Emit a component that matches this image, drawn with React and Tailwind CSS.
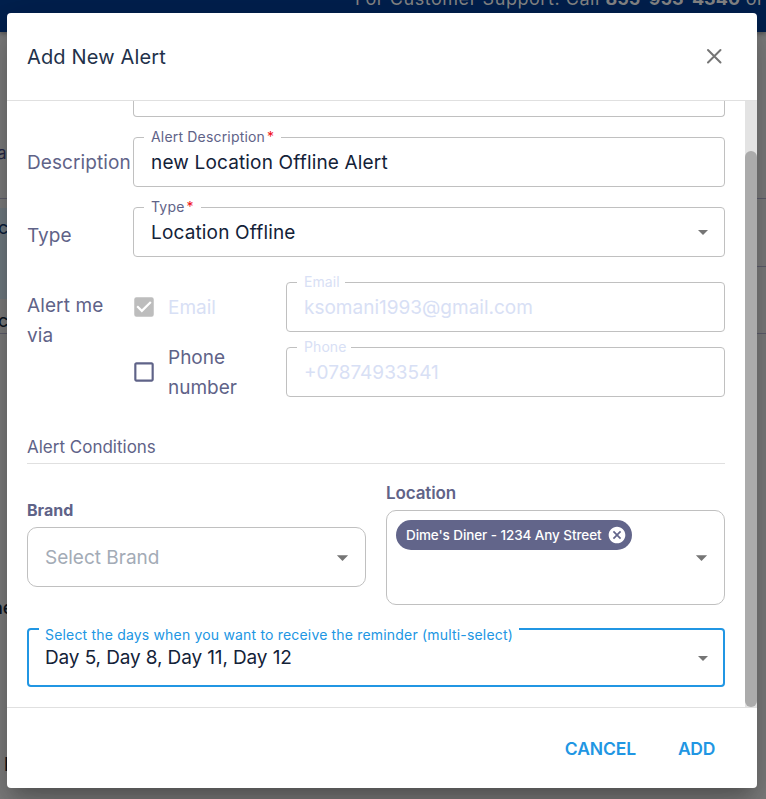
import React, { useState } from 'react';
import { MdArrowDropDown, MdCancel, MdCheckBox, MdCheckBoxOutlineBlank } from 'react-icons/md';

// text box with an outlined border and a label sitting in the notch
const OutlinedField = ({ label, value, required, disabled, select }) => (
  <div className="relative flex h-[50px] flex-1 items-center justify-between rounded border border-[#c0c0c0] pr-[9px] pl-[17px]">
    <span
      className={`absolute -top-[11px] left-[10px] bg-white pl-[7px] text-[14px] leading-5 whitespace-nowrap ${
        disabled ? 'pr-[5px] tracking-[0.08px] text-[#d8e0f5]' : 'pr-[7px] tracking-[0.18px] text-[#5f6388]'
      }`}
    >
      {label}
      {required && <span className="ml-[2px] text-[#f01018]">*</span>}
    </span>
    <span
      className={`pt-0.5 text-[19px] leading-6 whitespace-nowrap ${
        disabled ? 'text-[#d8e0f5]' : 'tracking-[0.16px] text-[#132238]'
      }`}
    >
      {value}
    </span>
    {select && <MdArrowDropDown className="size-6 text-[#757575]" />}
  </div>
);

const Backdrop = () => (
  <div className="absolute inset-0 flex flex-col overflow-hidden bg-[#7f7f7f]">
    <div className="h-8 shrink-0 bg-[#00204e] pl-[355px] shadow-[0_2px_4px_rgba(0,0,0,0.3)]">
      <p className="-mt-[13px] text-[18px] leading-6 tracking-[0.55px] whitespace-nowrap text-[#858585]">
        For Customer Support: Call <b className="tracking-normal">855-953-4340</b> or
      </p>
    </div>
    <div className="flex h-[167px] shrink-0 items-end border-b border-[#60606f] pb-[33px] text-[17px] leading-6 text-[#252849]">
      <span className="-ml-[3px]">a</span>
    </div>
    <div className="flex h-[68px] shrink-0 items-center border-b border-[#60606f] text-[18px] leading-6 text-[#0b1d3b]">
      <div className="mt-[42px] flex h-[91px] w-5 items-start bg-[#737d84] pt-2">
        <span className="-ml-[2px]">c</span>
      </div>
    </div>
    <div className="flex h-[67px] shrink-0 items-end border-b border-[#60606f] text-[18px] leading-6 text-[#0b1420]">
      <span className="-ml-[2px]">c</span>
    </div>
    <div className="mt-[262px] -ml-[8px] text-[18px] leading-6 font-medium text-[#0b1420]">ne</div>
    <div className="mt-[133px] ml-1 text-[18px] leading-6 font-medium text-[#0b1420]">L</div>
  </div>
);

export default function App() {
  const [phoneAlert, setPhoneAlert] = useState(false);

  return (
    <div className="relative h-[799px] w-[766px] overflow-hidden px-[7px] pt-[13px] font-['Inter',sans-serif]">
      <Backdrop />

      <div className="relative flex h-[775px] w-[750px] flex-col rounded bg-white shadow-[0_11px_15px_-7px_rgba(0,0,0,0.2),0_24px_38px_3px_rgba(0,0,0,0.14),0_9px_46px_8px_rgba(0,0,0,0.12)]">
        <header className="flex h-[88px] shrink-0 items-center justify-between border-b border-[#e0e0e0] pr-[35px] pl-5">
          <h2 className="text-[20px] leading-7 tracking-[0.16px] text-[#22314a]">Add New Alert</h2>
          <button aria-label="Close" className="pb-0.5">
            <svg className="size-4" viewBox="0 0 16 16" fill="none" stroke="#757575" strokeWidth="2" strokeLinecap="round">
              <path d="M2 2 14.5 14.5M14.5 2 2 14.5" />
            </svg>
          </button>
        </header>

        <div className="flex h-[606px] shrink-0">
          <div className="w-[738px] overflow-hidden px-5 text-[19px] leading-[30px] text-[#5f6388]">
            <div className="ml-[106px] h-4 rounded-b border border-t-0 border-[#c0c0c0]" />

            <div className="mt-5 flex items-center">
              <span className="w-[106px] pt-0.5 tracking-[0.1px]">Description</span>
              <OutlinedField label="Alert Description" value="new Location Offline Alert" required />
            </div>

            <div className="mt-5 flex items-center">
              <span className="w-[106px] pt-[7px]">Type</span>
              <OutlinedField label="Type" value="Location Offline" required select />
            </div>

            <div className="mt-[25px] flex">
              <span className="w-[104px] pt-[9px] pr-4 tracking-[0.1px]">Alert me via</span>
              <div className="flex flex-1 flex-col gap-[15px]">
                <div className="flex h-[50px] items-center">
                  <MdCheckBox className="size-[26px] text-[#bdbdbd]" />
                  <span className="ml-[11px] w-[118px] pt-0.5 text-[#d8e0f5]">Email</span>
                  <OutlinedField label="Email" value="ksomani1993@gmail.com" disabled />
                </div>
                <div className="flex h-[50px] items-center">
                  <button onClick={() => setPhoneAlert(!phoneAlert)}>
                    {phoneAlert ? (
                      <MdCheckBox className="size-[26px]" />
                    ) : (
                      <MdCheckBoxOutlineBlank className="size-[26px]" />
                    )}
                  </button>
                  <span className="ml-[11px] w-[118px] pt-0.5 pr-8">Phone number</span>
                  <OutlinedField label="Phone" value="+07874933541" disabled />
                </div>
              </div>
            </div>

            <h3 className="mt-[35px] h-8 border-b border-[#e0e0e0] text-[17px] leading-[31px]">Alert Conditions</h3>

            <div className="mt-[14px] flex gap-5">
              <div className="flex-1 pt-[17px]">
                <p className="text-[16px] leading-[30px] font-bold">Brand</p>
                <div className="mt-0.5 flex h-[60px] items-center justify-between rounded-[10px] border border-[#c0c0c0] pr-[9px] pl-[17px]">
                  <span className="pt-0.5 text-[#a3abb6]">Select Brand</span>
                  <MdArrowDropDown className="size-[27px] text-[#757575]" />
                </div>
              </div>
              <div className="flex-1">
                <p className="text-[17px] leading-[30px] font-semibold tracking-[-0.12px]">Location</p>
                <div className="mt-0.5 flex h-[95px] justify-between rounded-[10px] border border-[#c0c0c0] pr-[9px] pl-[9px]">
                  <div className="mt-[9px] flex h-[30px] w-[236px] items-center justify-between rounded-full bg-[#62658a] pr-[5px] pl-[10px] text-white">
                    <span className="text-[13.5px] font-medium tracking-[-0.09px] whitespace-nowrap">
                      Dime's Diner - 1234 Any Street
                    </span>
                    <MdCancel className="size-5" />
                  </div>
                  <MdArrowDropDown className="size-[27px] self-center text-[#757575]" />
                </div>
              </div>
            </div>

            <div className="relative mt-[23px] flex h-[59px] items-center justify-between rounded border-2 border-[#2196e3] pr-2 pl-4">
              <span className="absolute -top-[5px] left-[10px] bg-white pr-[6px] pl-[6px] text-[14px] leading-5 tracking-[0.18px] whitespace-nowrap text-[#2196e3]">
                Select the days when you want to receive the reminder (multi-select)
              </span>
              <span className="tracking-[-0.12px] text-[#132238]">Day 5, Day 8, Day 11, Day 12</span>
              <MdArrowDropDown className="size-6 text-[#757575]" />
            </div>
          </div>

          <div className="w-3 bg-[#e3e3e3] pt-[50px]">
            <div className="h-[556px] rounded-full bg-[#ababab]" />
          </div>
        </div>

        <footer className="flex h-[81px] shrink-0 items-center justify-end gap-[42px] border-t border-[#e0e0e0] pt-0.5 pr-[42px] text-[17.5px] font-semibold text-[#2196e3]">
          <button className="tracking-[-0.14px]">CANCEL</button>
          <button className="tracking-[-0.3px]">ADD</button>
        </footer>
      </div>
    </div>
  );
}
